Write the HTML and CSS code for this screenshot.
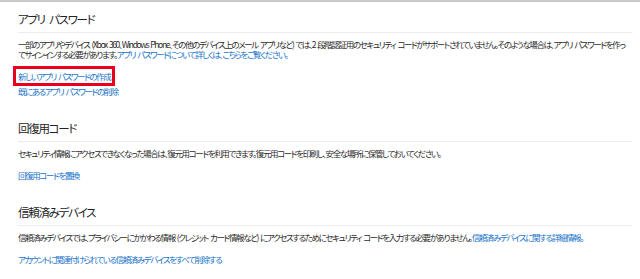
FILE: index.html
```html
<!DOCTYPE html>
<html lang="ja">
    <head>
        <meta charset="UTF-8">
        <meta name="viewport" content="width=device-width, initial-scale=1.0">
        <link rel="stylesheet" href="styles.css">
        <title>セキュリティ設定</title>
    </head>
    <body>
        <div class="page">
            <section class="block">
                <h2 class="block-title">アプリ パスワード</h2>
                <p class="block-text">一部のアプリやデバイス (Xbox 360、Windows Phone、その他のデバイス上のメール アプリなど) では、2 段階認証用のセキュリティ コードがサポートされていません。そのような場合は、アプリ パスワードを作っ<br>てサインインする必要があります。<a href="#">アプリ パスワードについて詳しくは、こちらをご覧ください。</a></p>
                <p class="action first"><a href="#" class="marked">新しいアプリ パスワードの作成</a></p>
                <p class="action"><a href="#">既にあるアプリ パスワードの削除</a></p>
            </section>

            <section class="block">
                <h2 class="block-title">回復用コード</h2>
                <p class="block-text">セキュリティ情報にアクセスできなくなった場合は、復元用コードを利用できます。復元用コードを印刷し、安全な場所に保管しておいてください。</p>
                <p class="action first"><a href="#">回復用コードを置換</a></p>
            </section>

            <section class="block">
                <h2 class="block-title">信頼済みデバイス</h2>
                <p class="block-text">信頼済みデバイスでは、プライバシーにかかわる情報 (クレジット カード情報など) にアクセスするためにセキュリティ コードを入力する必要がありません。<a href="#">信頼済みデバイスに関する詳細情報。</a></p>
                <p class="action first"><a href="#">アカウントに関連付けられている信頼済みデバイスをすべて削除する</a></p>
            </section>
        </div>
    </body>
</html>
```

FILE: styles.css
```css
body {
    margin: 0;
    background: #fff;
    font-family: "Noto Sans CJK JP", "Noto Sans", sans-serif;
    font-feature-settings: "palt";
    color: #2b2b2b;
    border-top: 2px solid #c9c9c9;
}

.page {
    padding: 9px 8px 0 18px;
    width: 614px;
}

.block + .block {
    margin-top: 24px;
}

.block-title {
    margin: 0;
    padding-bottom: 5px;
    border-bottom: 1px solid #ececec;
    font-size: 11.5px;
    font-weight: 400;
    line-height: 16px;
    letter-spacing: -1.3px;
    word-spacing: 3px;
    color: #222;
}

.block-text {
    margin: 6px 0 0;
    font-size: 8.5px;
    line-height: 10px;
    letter-spacing: -1.38px;
    word-spacing: 1.5px;
    white-space: nowrap;
}

a {
    color: #1a74c9;
    text-decoration: none;
}

.action {
    margin: 5px 0 0;
    font-size: 8.5px;
    line-height: 10px;
    letter-spacing: -1.4px;
    word-spacing: 1.5px;
}

.action.first {
    margin-top: 12px;
}

/* red highlight round the first link */
.marked {
    display: inline-block;
    outline: 3px solid #e8001c;
    outline-offset: 2px;
}
```
